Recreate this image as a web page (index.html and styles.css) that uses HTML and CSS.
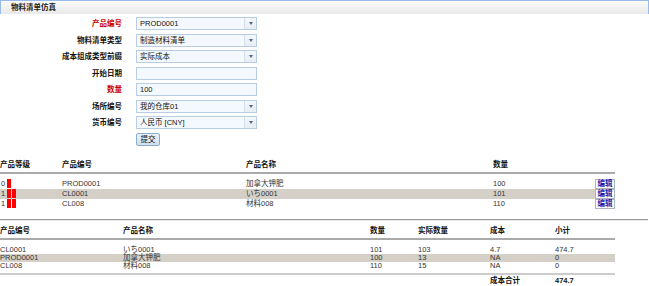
FILE: index.html
```html
<!DOCTYPE html>
<html lang="zh-CN">
<head>
    <meta charset="UTF-8">
    <title>物料清单仿真</title>
    <link rel="stylesheet" href="styles.css">
</head>
<body>
    <div class="panel">
        <div class="panel-head">物料清单仿真</div>
        <form class="sim-form">
            <label class="req">产品编号</label>
            <div class="combo"><span>PROD0001</span><i></i></div>
            <label>物料清单类型</label>
            <div class="combo"><span>制造材料清单</span><i></i></div>
            <label>成本组成类型前缀</label>
            <div class="combo"><span>实际成本</span><i></i></div>
            <label>开始日期</label>
            <div class="field"><span></span></div>
            <label class="req">数量</label>
            <div class="field"><span>100</span></div>
            <label>场所编号</label>
            <div class="combo"><span>我的仓库01</span><i></i></div>
            <label>货币编号</label>
            <div class="combo"><span>人民币 [CNY]</span><i></i></div>
            <span></span>
            <div><button type="button" class="btn">提交</button></div>
        </form>
    </div>

    <table class="grid tree">
        <colgroup>
            <col style="width:62px"><col style="width:184px"><col style="width:247px"><col style="width:102px"><col style="width:20px">
        </colgroup>
        <thead>
            <tr><th>产品等级</th><th>产品编号</th><th>产品名称</th><th>数量</th><th></th></tr>
        </thead>
        <tbody>
            <tr><td>0<i class="lvl first"></i></td><td>PROD0001</td><td>加拿大钾肥</td><td>100</td><td><a class="edit">编辑</a></td></tr>
            <tr class="alt"><td>1<i class="lvl first"></i><i class="lvl"></i></td><td>CL0001</td><td>いち0001</td><td>101</td><td><a class="edit">编辑</a></td></tr>
            <tr><td>1<i class="lvl first"></i><i class="lvl"></i></td><td>CL008</td><td>材料008</td><td>110</td><td><a class="edit">编辑</a></td></tr>
        </tbody>
    </table>

    <hr class="sep">

    <table class="grid result">
        <colgroup>
            <col style="width:123px"><col style="width:247px"><col style="width:48px"><col style="width:72px"><col style="width:65px"><col style="width:60px">
        </colgroup>
        <thead>
            <tr><th>产品编号</th><th>产品名称</th><th>数量</th><th>实际数量</th><th>成本</th><th>小计</th></tr>
        </thead>
        <tbody>
            <tr><td>CL0001</td><td>いち0001</td><td>101</td><td>103</td><td>4.7</td><td>474.7</td></tr>
            <tr class="alt"><td>PROD0001</td><td>加拿大钾肥</td><td>100</td><td>13</td><td>NA</td><td>0</td></tr>
            <tr><td>CL008</td><td>材料008</td><td>110</td><td>15</td><td>NA</td><td>0</td></tr>
        </tbody>
        <tfoot>
            <tr><td></td><td></td><td></td><td></td><td>成本合计</td><td>474.7</td></tr>
        </tfoot>
    </table>
</body>
</html>
```

FILE: styles.css
```css
body {
    margin: 0;
    font-family: "Liberation Sans", "Noto Sans CJK SC", sans-serif;
    font-size: 7.5px;
    color: #333;
    background-color: #fff;
}
.panel-head {
    height: 13px;
    line-height: 13px;
    padding-left: 10px;
    border: 1px solid #99bbe8;
    border-bottom: none;
    background: linear-gradient(#fbfbfb, #e9e9e9);
    font-weight: bold;
    color: #222;
}
.sim-form {
    display: grid;
    grid-template-columns: 122px 121px;
    grid-auto-rows: 13px;
    column-gap: 14px;
    row-gap: 3.5px;
    padding-top: 3px;
}
.sim-form label {
    text-align: right;
    font-weight: bold;
    color: #111;
    line-height: 13px;
}
.sim-form label.req {
    color: #c00;
}
.field,
.combo {
    display: flex;
    box-sizing: border-box;
    height: 13px;
    border: 1px solid #b9cde2;
    background-color: #f3f9ff;
    color: #111;
}
.field span,
.combo span {
    flex: 1;
    padding-left: 3px;
    line-height: 11px;
}
.combo i {
    width: 11px;
    border-left: 1px solid #d3dfec;
    background: linear-gradient(#f4f7fb, #e7edf4);
    display: flex;
    align-items: center;
    justify-content: center;
}
.combo i::after {
    content: "";
    border-left: 2.5px solid transparent;
    border-right: 2.5px solid transparent;
    border-top: 3px solid #4b6a8c;
}
.btn {
    height: 13px;
    width: 24px;
    padding: 0;
    border: 1px solid #8eaacb;
    border-radius: 2px;
    background: linear-gradient(#e9f1fa, #cfe0f1);
    font-family: inherit;
    font-size: 7.5px;
    color: #111;
    line-height: 11px;
}
.grid {
    width: 615px;
    table-layout: fixed;
    border-collapse: collapse;
}
.grid th {
    text-align: left;
    font-weight: bold;
    color: #111;
    line-height: 11px;
    padding: 0 0 2px 0;
    border-bottom: 2px solid #aaa;
}
.grid td {
    padding: 0;
    white-space: nowrap;
}
.grid tr.alt td {
    background-color: #d4d0c8;
}
.tree {
    margin-top: 13px;
}
.tree td {
    line-height: 10px;
    height: 10px;
}
.tree tbody tr:first-child td {
    padding-top: 5px;
}
.tree td:first-child {
    padding-left: 1px;
}
.lvl {
    display: inline-block;
    width: 4px;
    height: 9px;
    margin-left: 1px;
    vertical-align: top;
    background-color: #f00;
}
.lvl.first {
    margin-left: 2px;
}
.edit {
    display: block;
    box-sizing: border-box;
    height: 10px;
    width: 20px;
    border: 1px solid #b0b4c0;
    background-color: #fff;
    color: #1a1aa8;
    font-weight: bold;
    line-height: 8px;
    text-align: center;
}
.sep {
    margin: 10px 1px 4px 0;
    border: none;
    border-top: 1px solid #9a9a9a;
    border-bottom: 1px solid #e6e6e6;
}
.result td {
    line-height: 8px;
    height: 8px;
}
.result tbody tr:first-child td {
    padding-top: 6px;
}
.result tfoot td {
    border-top: 2px solid #ccc;
    padding-top: 1px;
    line-height: 10px;
    font-weight: bold;
    color: #111;
}
.result tbody tr:last-child td {
    padding-bottom: 3px;
}
```
